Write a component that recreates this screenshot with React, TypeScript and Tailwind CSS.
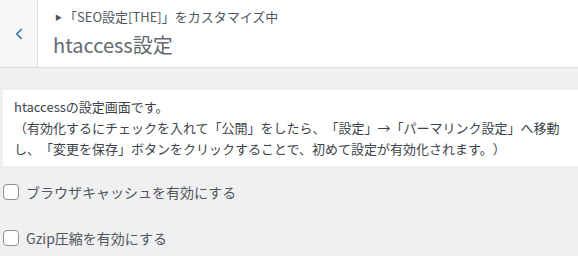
import { FiChevronLeft } from "react-icons/fi";

const font = { fontFamily: '"Noto Sans CJK JP", "Noto Sans", sans-serif' };

const Check = ({ label }: { label: string }) => (
  <label className="flex flex-row items-center gap-[7px] pl-[3px] h-4">
    <span className="w-4 h-4 rounded-[4px] border border-[#8c8f94] bg-white shrink-0"></span>
    <span className="text-[14px] text-[#50575e] leading-none">{label}</span>
  </label>
);

export default function App() {
  return (
    <div className="w-[578px] h-[256px] bg-[#f0f0f1] overflow-hidden [text-spacing-trim:space-all]" style={font}>
      <div className="flex flex-row h-[68px] bg-white border-b border-[#dcdcde]">
        <button className="w-[38px] h-full bg-[#f6f7f7] border-r border-[#dcdcde] flex items-center justify-center text-[#2271b1]">
          <FiChevronLeft className="w-[18px] h-[18px] stroke-[2]" />
        </button>
        <div className="flex flex-col pl-[15px] pt-[7px]">
          <p className="text-[13px] text-[#50575e] leading-[20px] flex items-center">
            <span className="text-[7px] mr-[2px] ml-[2px]">▶</span>
            <span>「SEO設定[THE]」をカスタマイズ中</span>
          </p>
          <p className="text-[20px] text-[#646970] leading-[28px] mt-[4px]">htaccess設定</p>
        </div>
      </div>
      <div className="ml-[3px] mt-[22px] bg-white pl-[11px] pr-2 pt-[6px] pb-[6px] h-[76px]">
        <p className="text-[13px] text-[#3c434a] leading-[21px] whitespace-nowrap">
          htaccessの設定画面です。
          <br />
          （有効化するにチェックを入れて「公開」をしたら、「設定」→「パーマリンク設定」へ移動
          <br />
          し、「変更を保存」ボタンをクリックすることで、初めて設定が有効化されます。）
        </p>
      </div>
      <div className="flex flex-col gap-[30px] pt-[18px]">
        <Check label="ブラウザキャッシュを有効にする" />
        <Check label="Gzip圧縮を有効にする" />
      </div>
    </div>
  );
}
